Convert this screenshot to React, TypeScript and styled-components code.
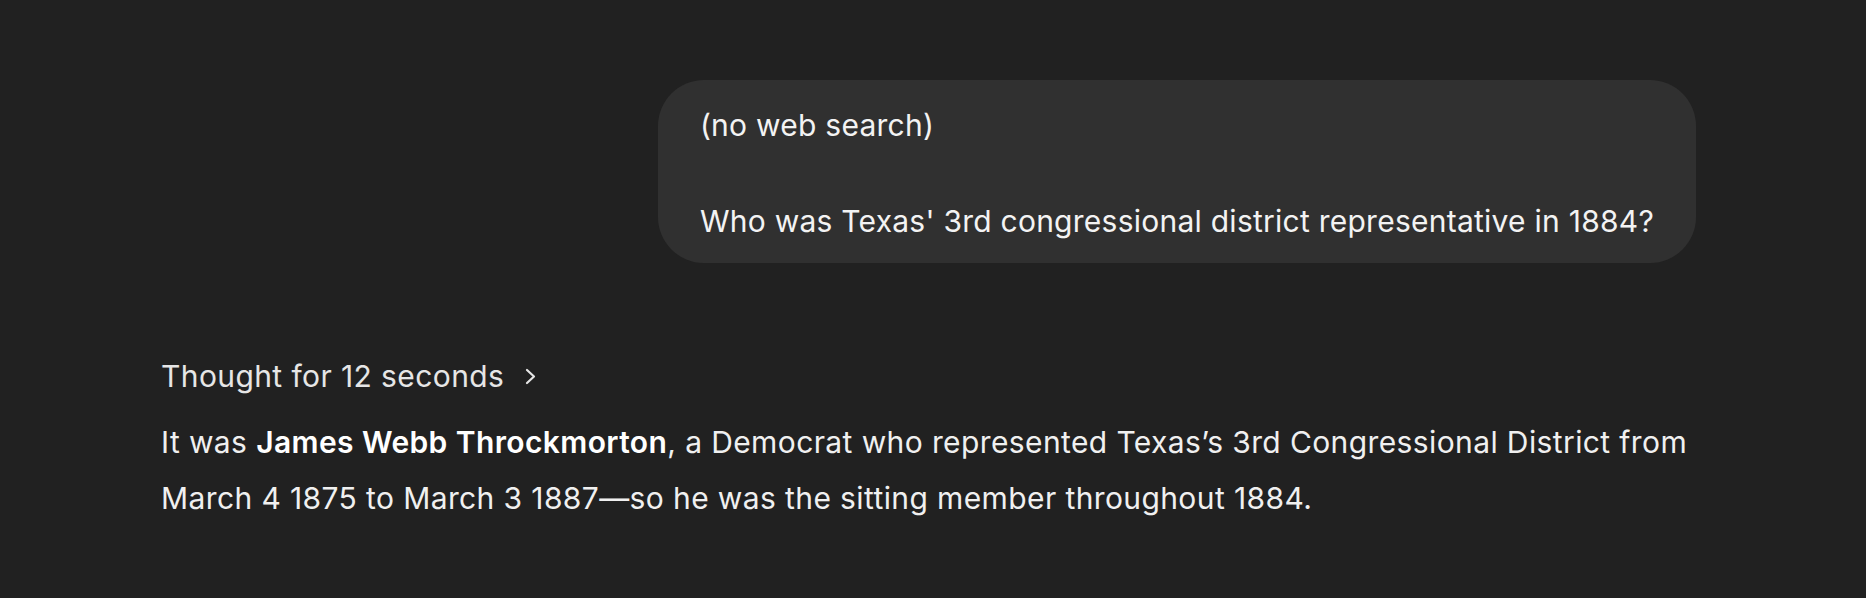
import React from 'react';
import styled, { createGlobalStyle } from 'styled-components';

const GlobalStyle = createGlobalStyle`
  html, body {
    margin: 0;
    padding: 0;
    background: #212121;
  }

  body {
    font-family: Inter, "Noto Sans", "Liberation Sans", sans-serif;
    color: #ececec;
    -webkit-font-smoothing: antialiased;
  }
`;

const Page = styled.div`
  min-height: 598px;
  box-sizing: border-box;
  padding: 80px 170px 0 161px;
  display: flex;
  flex-direction: column;
`;

const UserRow = styled.div`
  display: flex;
  justify-content: flex-end;
`;

const Bubble = styled.div`
  background: #303030;
  border-radius: 46px;
  padding: 21px 42px 18px;
  font-size: 30px;
  line-height: 48px;
  letter-spacing: 0.25px;
  white-space: pre-wrap;
  color: #f3f3f3;
`;

const Assistant = styled.div`
  margin-top: 93px;
  display: flex;
  flex-direction: column;
  gap: 18px;
`;

const Thought = styled.button`
  all: unset;
  display: inline-flex;
  align-items: center;
  gap: 20px;
  align-self: flex-start;
  font-size: 30px;
  line-height: 40px;
  letter-spacing: 0.4px;
  color: #e6e6e6;
  cursor: pointer;
`;

const Answer = styled.p`
  margin: 0;
  font-size: 30px;
  line-height: 56px;
  letter-spacing: 0.39px;
  color: #f0f0f0;

  strong {
    font-weight: 600;
    color: #ffffff;
  }
`;

function Chevron (): React.ReactElement {
  return (
    <svg width='13' height='17' viewBox='0 0 13 17' fill='none'>
      <path d='M3 2 L10 8.5 L3 15' stroke='#e6e6e6' strokeWidth='2.2' strokeLinecap='round' strokeLinejoin='round' />
    </svg>
  );
}

export default function App (): React.ReactElement {
  return (
    <>
      <GlobalStyle />
      <Page>
        <UserRow>
          <Bubble>{"(no web search)\n\nWho was Texas' 3rd congressional district representative in 1884?"}</Bubble>
        </UserRow>
        <Assistant>
          <Thought>
            Thought for 12 seconds
            <Chevron />
          </Thought>
          <Answer>
            It was <strong>James Webb Throckmorton</strong>, a Democrat who represented Texas’s 3rd Congressional District from March 4 1875 to March 3 1887—so he was the sitting member throughout 1884.
          </Answer>
        </Assistant>
      </Page>
    </>
  );
}
